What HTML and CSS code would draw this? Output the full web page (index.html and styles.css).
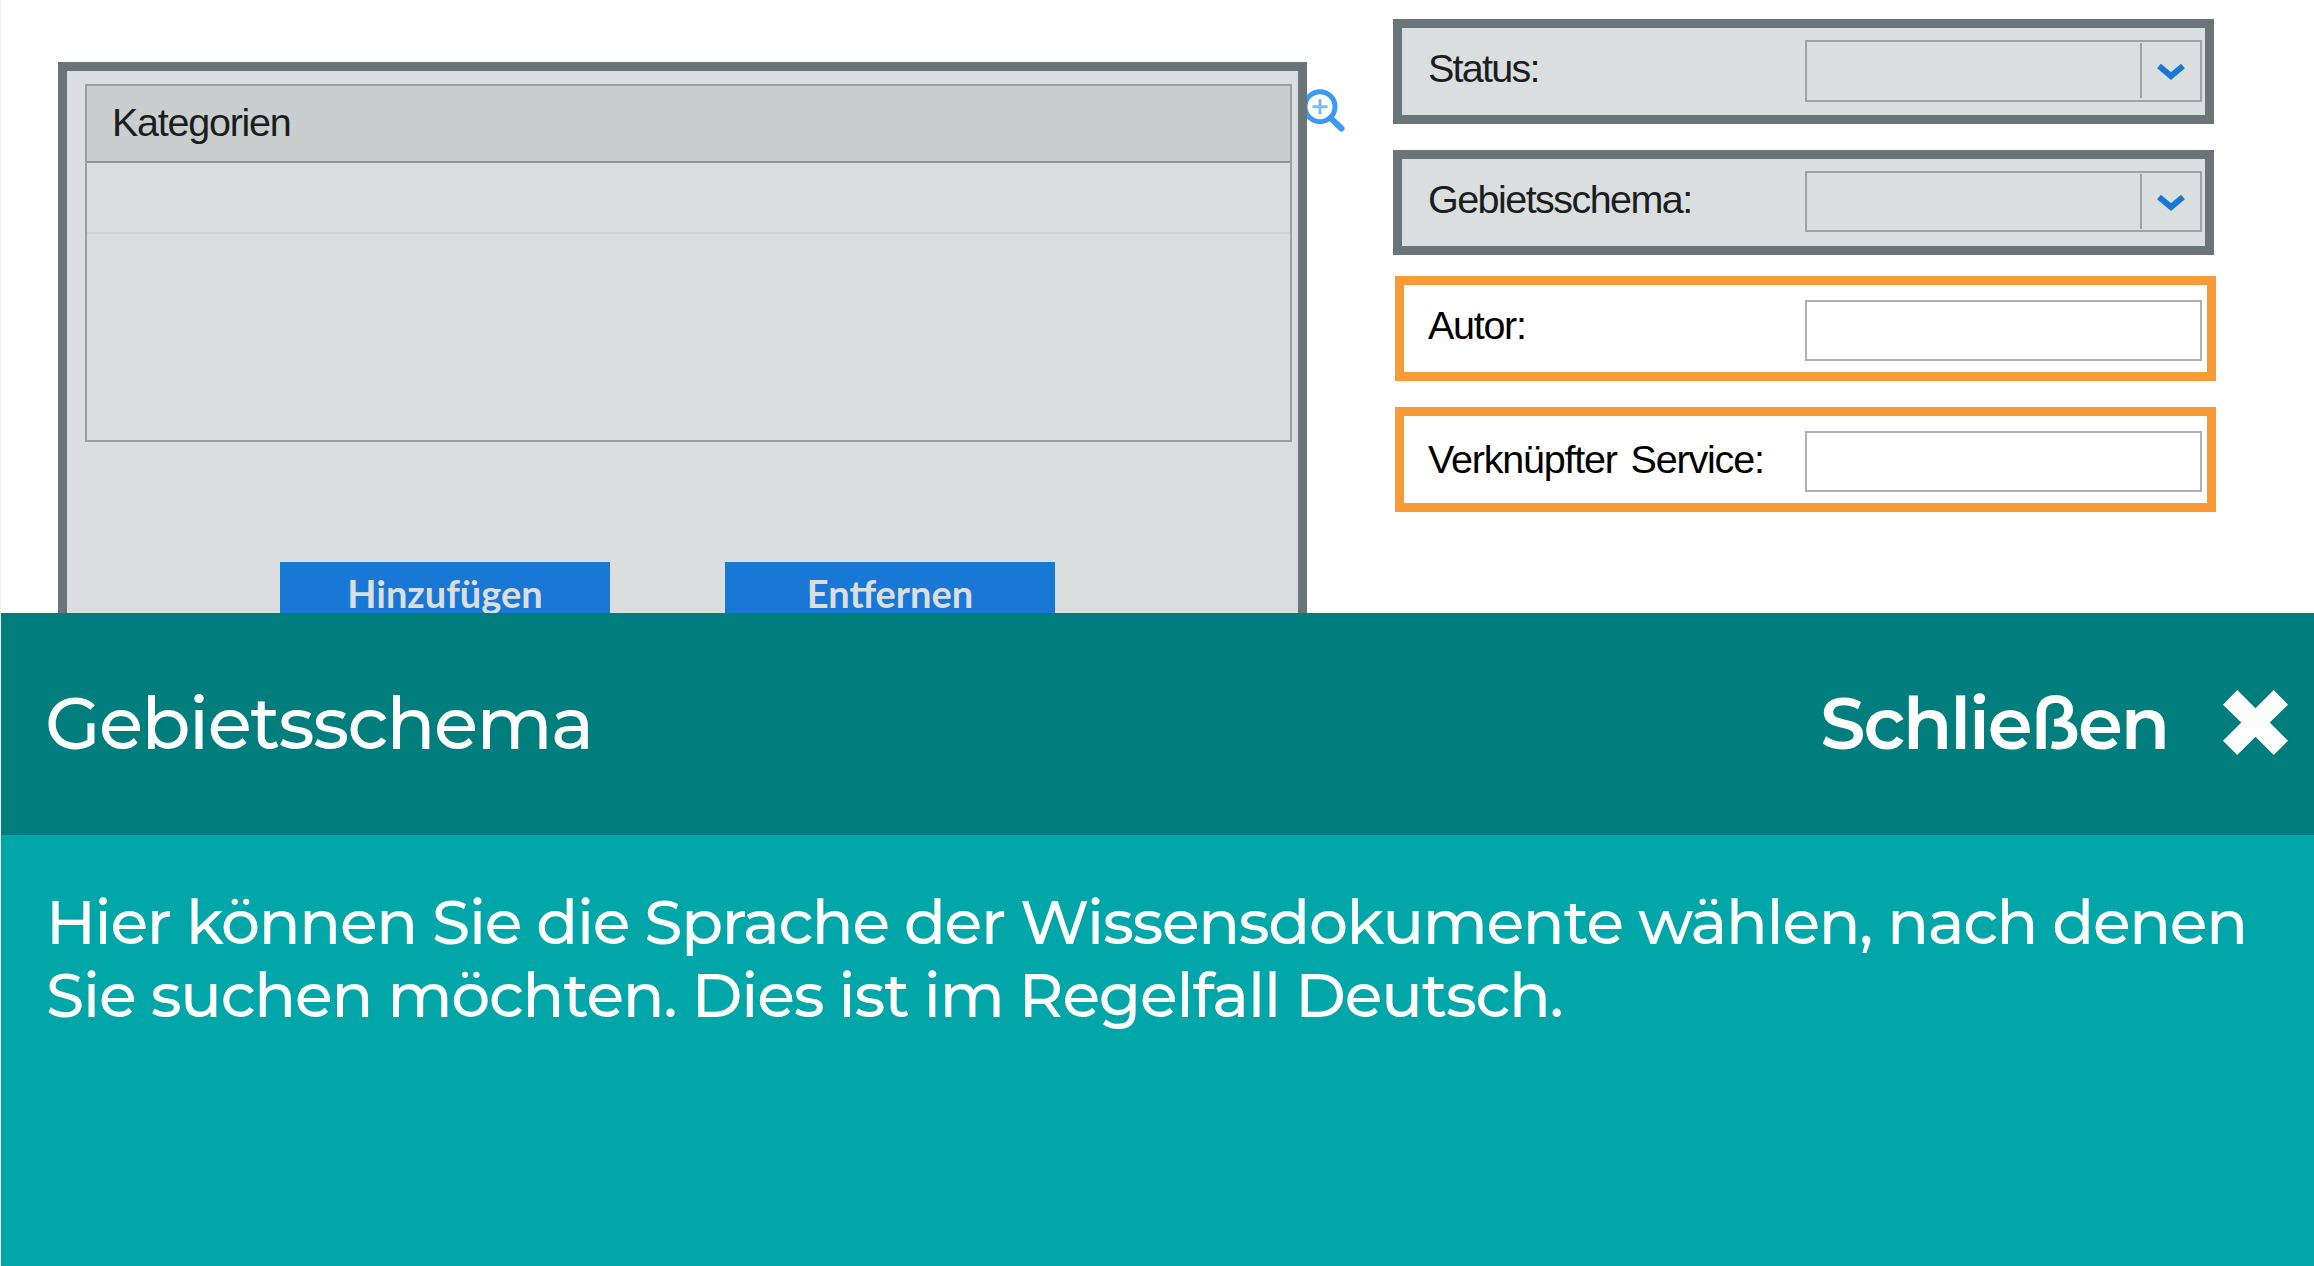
FILE: index.html
```html
<!DOCTYPE html>
<html lang="de">
<head>
<meta charset="utf-8">
<title>Gebietsschema</title>
<link rel="stylesheet" href="styles.css">
</head>
<body>
<div class="page">
  <main class="form">
    <section class="categories">
      <div class="table">
        <div class="table-head"><span class="label">Kategorien</span></div>
        <div class="table-row"></div>
        <div class="table-rest"></div>
      </div>
      <div class="actions">
        <button class="btn">Hinzufügen</button>
        <button class="btn">Entfernen</button>
      </div>
    </section>
    <svg class="lookup" viewBox="0 0 40 50">
      <circle cx="13" cy="18.7" r="15"/>
      <path class="handle" d="M24 30.5 34.5 40.5"/>
      <path class="plus" d="M5.5 18.7h15M13 11.2v15"/>
    </svg>
    <section class="fields">
      <div class="field muted status">
        <span class="label">Status:</span>
        <div class="select"><div class="arrow"><svg viewBox="0 0 30 20"><path d="M3 4 15 14 27 4"/></svg></div></div>
      </div>
      <div class="field muted locale">
        <span class="label">Gebietsschema:</span>
        <div class="select"><div class="arrow"><svg viewBox="0 0 30 20"><path d="M3 4 15 14 27 4"/></svg></div></div>
      </div>
      <div class="field active author">
        <span class="label">Autor:</span>
        <div class="input"></div>
      </div>
      <div class="field active service">
        <span class="label">Verknüpfter Service:</span>
        <div class="input"></div>
      </div>
    </section>
  </main>
  <aside class="help">
    <header class="help-head">
      <h1 class="title">Gebietsschema</h1>
      <div class="close">
        <span class="close-text">Schließen</span>
        <svg class="cross" viewBox="0 0 65.4 65.4"><path d="M14.3 0 32.7 18.4 51.1 0 65.4 14.8 47 32.7 65.4 51 51.1 65.4 32.7 47 14.3 65.4 0 51 18.4 32.7 0 14.8Z"/></svg>
      </div>
    </header>
    <p class="help-body"><span class="line-one">Hier können Sie die Sprache der Wissensdokumente wählen, nach denen</span><br><span class="line-two">Sie suchen möchten. Dies ist im Regelfall Deutsch.</span></p>
  </aside>
</div>
</body>
</html>
```
FILE: styles.css
```css
* { box-sizing: border-box; }

body {
  margin: 0;
  background: #fff;
  font-family: "Liberation Sans", Arial, sans-serif;
}

.page {
  display: flex;
  flex-direction: column;
  width: 2314px;
  height: 1266px;
  overflow: hidden;
  border-left: 1px solid #f0f1f1;
}

.form {
  display: flex;
  align-items: flex-start;
  height: 613px;
  overflow: hidden;
}

.categories {
  width: 1249px;
  height: 640px;
  margin: 62px 0 0 57px;
  padding: 13px 6px 0 18px;
  flex: none;
  border: 9px solid #697578;
  background: #dadedf;
}

.table {
  height: 358px;
  border: 2px solid #989d9e;
}

.table-head {
  display: flex;
  align-items: center;
  height: 77px;
  padding: 0 0 3px 25px;
  background: #cacecf;
  border-bottom: 2px solid #8f9495;
}

.table-row {
  height: 71px;
  border-bottom: 2px solid #d0d4d5;
}

.label {
  font-size: 39.5px;
  line-height: 46px;
  letter-spacing: -1.25px;
  color: #1a1e1e;
  white-space: nowrap;
}

.actions {
  display: flex;
  gap: 115px;
  padding: 120px 0 0 195px;
}

.btn {
  width: 330px;
  height: 90px;
  padding: 8px 0 0;
  border: 0;
  display: flex;
  justify-content: center;
  align-items: flex-start;
  background: #1978d6;
  color: #dadedf;
  font: 700 38px/46px Lato, sans-serif;
}

.lookup {
  flex: none;
  width: 40px;
  height: 50px;
  margin-top: 88px;
  fill: none;
  stroke: #3a98f6;
  stroke-width: 5;
}

.lookup .handle { stroke-width: 6; stroke-linecap: round; }
.lookup .plus { stroke: #7cbaf8; stroke-width: 3; }

.fields {
  margin: 19px 0 0 46px;
  flex: none;
}

.field {
  display: flex;
  justify-content: space-between;
  width: 821px;
  height: 105px;
  border: 9px solid #697578;
}

.muted { background: #dadedf; padding: 12px 3px 0 26px; }
.active { border-color: #f99a39; margin-left: 2px; padding: 15px 5px 0 24px; }
.active .label { color: #000; }
.locale { margin-top: 26px; }
.author { margin-top: 21px; }
.service { margin-top: 26px; }

.status .label { margin-top: 5px; letter-spacing: -1.75px; }
.locale .label { margin-top: 5px; letter-spacing: -1.55px; }
.author .label { margin-top: 2px; letter-spacing: -1.3px; }
.service .label { margin-top: 5px; letter-spacing: -1.2px; word-spacing: 4px; }

.select, .input {
  width: 397px;
  height: 62px;
  border: 2px solid #9da2a3;
}

.locale .select, .input { height: 61px; }
.input { border-color: #b0b0b0; }

.select {
  display: flex;
  justify-content: flex-end;
  padding: 1px 0 4px;
}

.arrow {
  width: 60px;
  height: 55px;
  padding: 19px 0 0 14px;
  border-left: 2px solid #9da2a3;
}

.arrow svg {
  display: block;
  width: 30px;
  height: 20px;
  fill: none;
  stroke: #1978d6;
  stroke-width: 6;
}

.help {
  flex: 1;
  background: #00a6a8;
  color: #fff;
  font-family: Gotham, Montserrat, Inter, sans-serif;
}

.help-head {
  display: flex;
  justify-content: space-between;
  align-items: center;
  height: 222px;
  padding: 0 26px 3px 44px;
  background: #007d7d;
}

.title, .close-text {
  margin: 0;
  font-size: 72px;
  font-weight: 500;
  line-height: 84px;
  letter-spacing: -1.55px;
}

.close {
  display: flex;
  align-items: center;
  gap: 55px;
}

.close-text {
  font-weight: 600;
  letter-spacing: -2px;
}

.cross {
  width: 65px;
  height: 65px;
  fill: #fff;
}

.help-body {
  margin: 0;
  padding: 50px 0 0 45px;
  font-size: 61.5px;
  font-weight: 500;
  line-height: 73px;
  white-space: nowrap;
}

.line-one { letter-spacing: -1.32px; }
.line-two { letter-spacing: -1.2px; }
```
